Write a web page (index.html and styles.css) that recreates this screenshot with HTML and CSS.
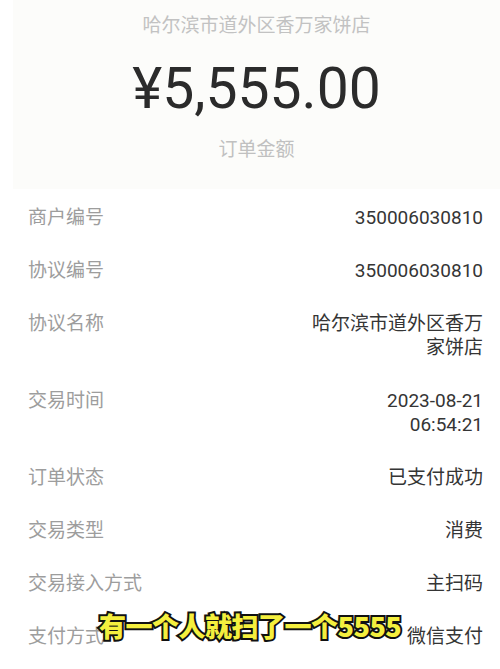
FILE: index.html
```html
<!DOCTYPE html>
<html lang="zh-CN">
<head>
  <meta charset="UTF-8">
  <title>订单详情</title>
  <link rel="stylesheet" href="styles.css">
</head>
<body>

  <div class="summary">
    <div class="shop">哈尔滨市道外区香万家饼店</div>
    <div class="amount">¥5,555.00</div>
    <div class="amount-label">订单金额</div>
  </div>

  <div class="details">
    <div class="row">
      <span class="label">商户编号</span>
      <span class="value">350006030810</span>
    </div>
    <div class="row">
      <span class="label">协议编号</span>
      <span class="value">350006030810</span>
    </div>
    <div class="row">
      <span class="label">协议名称</span>
      <span class="value">哈尔滨市道外区香万家饼店</span>
    </div>
    <div class="row">
      <span class="label">交易时间</span>
      <span class="value">2023-08-21<br>06:54:21</span>
    </div>
    <div class="row">
      <span class="label">订单状态</span>
      <span class="value">已支付成功</span>
    </div>
    <div class="row">
      <span class="label">交易类型</span>
      <span class="value">消费</span>
    </div>
    <div class="row">
      <span class="label">交易接入方式</span>
      <span class="value">主扫码</span>
    </div>
    <div class="row">
      <span class="label">支付方式</span>
      <span class="value">微信支付</span>
    </div>
  </div>

  <div class="caption">有一个人就扫了一个5555</div>

</body>
</html>
```

FILE: styles.css
```css
body {
  margin: 0;
  background-color: #fff;
  font-family: Roboto, "Noto Sans CJK SC", sans-serif;
  overflow: hidden;
  position: relative;
  height: 669px;
}
.summary {
  margin-left: 13px;
  height: 189px;
  background-color: #fcfcfa;
  text-align: center;
  padding-top: 14px;
  box-sizing: border-box;
}
.shop {
  font-size: 19px;
  line-height: 24px;
  color: #c2c2c2;
}
.amount {
  font-size: 57px;
  line-height: 70px;
  margin-top: 16px;
  color: #2b2b2b;
}
.amount-label {
  font-size: 19px;
  line-height: 24px;
  margin-top: 14px;
  color: #c0c0c0;
}
.details {
  padding: 3px 17px 0 28px;
}
.row {
  display: flex;
  justify-content: space-between;
  align-items: flex-start;
  padding: 14px 0 15px;
  font-size: 19px;
  line-height: 24px;
}
.label {
  color: #9d9d9d;
}
.value {
  color: #353535;
  max-width: 175px;
  text-align: right;
}
.caption {
  position: absolute;
  left: 99px;
  top: 612px;
  font-family: "Noto Sans CJK SC", sans-serif;
  font-size: 27px;
  font-weight: 900;
  line-height: 28px;
  color: #f4ef3e;
  -webkit-text-stroke: 4px #111;
  paint-order: stroke fill;
  letter-spacing: -0.5px;
}
```
